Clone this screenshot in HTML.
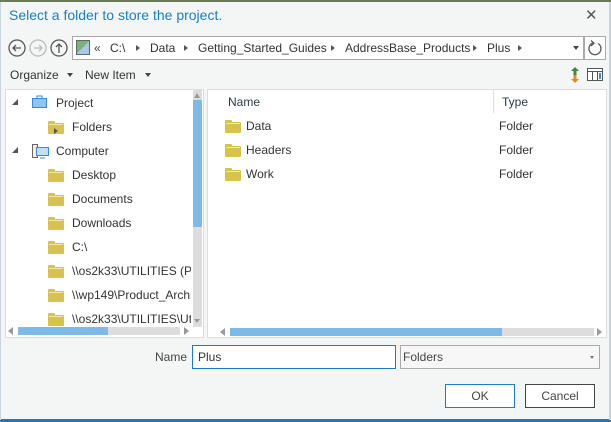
<!DOCTYPE html>
<html><head><style>
*{margin:0;padding:0;box-sizing:border-box}
body{width:611px;height:422px;overflow:hidden;background:#f4f6f6;font-family:"Liberation Sans",sans-serif;font-size:12px;color:#333;position:relative}
.a{position:absolute;white-space:nowrap}
.f{position:absolute;width:16px;height:11px;background:#d8c34a;border-radius:1px}
.f:before{content:"";position:absolute;left:0;top:-2px;width:7px;height:3px;background:#d8c34a;border-radius:1px 1px 0 0}
.f:after{content:"";position:absolute;left:1px;top:1px;width:14px;height:1px;background:#f3e8a8}
.t{font-size:12px;color:#333}
.tri{position:absolute;width:0;height:0;border-left:3px solid transparent;border-right:3px solid transparent;border-top:4px solid #444}
.arr{position:absolute;width:0;height:0;border-top:3.5px solid transparent;border-bottom:3.5px solid transparent;border-left:4px solid #555}
</style></head><body>
<div class="a" style="left:0;top:0;width:611px;height:2px;background:#6a7a5a"></div>
<div class="a" style="left:0;top:419px;width:611px;height:3px;background:#3b6fa0"></div>
<div class="a" style="left:0;top:2px;width:1px;height:418px;background:#c8d4dc"></div>
<div class="a" style="left:609px;top:2px;width:2px;height:418px;background:#c8d4dc"></div>
<div class="a" style="left:9px;top:7px;font-size:14px;color:#1c7fc4">Select a folder to store the project.</div>
<div class="a" style="left:585px;top:6px;font-size:15px;color:#555">✕</div>

<svg class="a" style="left:7px;top:38px" width="62" height="20">
<circle cx="10" cy="10" r="8" fill="none" stroke="#555" stroke-width="1.3"/><path d="M14 10H6M9 7L6 10L9 13" fill="none" stroke="#555" stroke-width="1.3"/>
<circle cx="31" cy="10" r="8" fill="none" stroke="#bbb" stroke-width="1.3"/><path d="M27 10H35M32 7L35 10L32 13" fill="none" stroke="#bbb" stroke-width="1.3"/>
<circle cx="52" cy="10" r="8" fill="none" stroke="#555" stroke-width="1.3"/><path d="M52 15V6M49 9L52 6L55 9" fill="none" stroke="#555" stroke-width="1.3"/>
</svg>
<div class="a" style="left:72px;top:36px;width:512px;height:24px;background:#fff;border:1px solid #aaa"></div>
<div class="a" style="left:76px;top:40px;width:14px;height:15px;background:linear-gradient(135deg,#7bb07b 50%,#a8c8e8 50%);border:1px solid #666"></div>
<div class="a" style="left:94px;top:41px;color:#444">«</div>
<div class="a" style="left:110px;top:41px;color:#333">C:\</div>
<div class="arr" style="left:136px;top:45px"></div>
<div class="a" style="left:150px;top:41px">Data</div>
<div class="arr" style="left:184px;top:45px"></div>
<div class="a" style="left:198px;top:41px">Getting_Started_Guides</div>
<div class="arr" style="left:331px;top:45px"></div>
<div class="a" style="left:345px;top:41px">AddressBase_Products</div>
<div class="arr" style="left:473px;top:45px"></div>
<div class="a" style="left:487px;top:41px">Plus</div>
<div class="arr" style="left:518px;top:45px"></div>
<div class="tri" style="left:573px;top:46px"></div>
<div class="a" style="left:584px;top:36px;width:22px;height:24px;border:1px solid #aaa;background:#fff"></div>
<svg class="a" style="left:587px;top:39px" width="16" height="18"><path d="M6 4A6 6 0 1 0 11 4.5" fill="none" stroke="#555" stroke-width="1.3"/><path d="M4 1.5L7 4.3L4 7" fill="none" stroke="#555" stroke-width="1.2"/></svg>

<div class="a" style="left:10px;top:68px;color:#333">Organize</div>
<div class="tri" style="left:67px;top:73px"></div>
<div class="a" style="left:85px;top:68px">New Item</div>
<div class="tri" style="left:145px;top:73px"></div>
<svg class="a" style="left:569px;top:66px" width="12" height="18"><path d="M6 1L2 5H4.5V9H7.5V5H10Z" fill="#3a8a3a"/><path d="M6 17L2 13H4.5V9H7.5V13H10Z" fill="#e08a2a"/></svg>
<svg class="a" style="left:587px;top:68px" width="16" height="13"><rect x="0.5" y="0.5" width="15" height="12" fill="#fff" stroke="#555"/><path d="M0.5 3.5H15.5M5.5 3.5V12.5M10.5 3.5V12.5" stroke="#555"/><rect x="12" y="5" width="2" height="6" fill="#3a8ad8"/></svg>

<!-- left pane -->
<div class="a" style="left:5px;top:89px;width:199px;height:249px;background:#fff;border:1px solid #ddd"></div>
<div class="a" style="left:193px;top:90px;width:9px;height:237px;background:#ddd"></div>
<div class="a" style="left:193px;top:100px;width:9px;height:127px;background:#7dbbe6"></div>
<div class="tri" style="left:194px;top:93px;border-top:0;border-bottom:5px solid #999;border-left-width:3.5px;border-right-width:3.5px"></div>
<div class="tri" style="left:194px;top:319px;border-top-color:#999;border-left-width:3.5px;border-right-width:3.5px"></div>
<div class="a" style="left:6px;top:326px;width:187px;height:9px;background:#fff"></div>
<div class="a" style="left:18px;top:327px;width:162px;height:8px;background:#ddd"></div>
<div class="a" style="left:18px;top:327px;width:90px;height:8px;background:#7dbbe6"></div>
<div class="a" style="left:8px;top:327px;width:0;height:0;border-top:4px solid transparent;border-bottom:4px solid transparent;border-right:5px solid #999"></div>
<div class="a" style="left:184px;top:327px;width:0;height:0;border-top:4px solid transparent;border-bottom:4px solid transparent;border-left:5px solid #999"></div>

<div class="a" style="left:12px;top:99px;width:0;height:0;border-left:6px solid transparent;border-bottom:6px solid #555"></div>
<svg class="a" style="left:32px;top:95px" width="16" height="14"><path d="M5 3V1H10V3" fill="none" stroke="#3a8ad8"/><rect x="0.5" y="3.5" width="14" height="9" fill="#8ec4ee" stroke="#3a8ad8"/></svg>
<div class="a t" style="left:56px;top:96px">Project</div>
<div class="f" style="left:48px;top:123px"></div>
<div class="a" style="left:54px;top:128px;width:0;height:0;border-top:3px solid transparent;border-bottom:3px solid transparent;border-left:4px solid #555"></div>
<div class="a t" style="left:72px;top:120px">Folders</div>
<div class="a" style="left:12px;top:147px;width:0;height:0;border-left:6px solid transparent;border-bottom:6px solid #555"></div>
<svg class="a" style="left:32px;top:144px" width="18" height="16"><rect x="0.5" y="0.5" width="5" height="13" fill="#eee" stroke="#666"/><rect x="4.5" y="3.5" width="12" height="8" fill="#bfe0f8" stroke="#3a8ad8"/><path d="M8 14H13" stroke="#3a8ad8"/></svg>
<div class="a t" style="left:56px;top:144px">Computer</div>
<div class="f" style="left:48px;top:171px"></div><div class="a t" style="left:72px;top:168px">Desktop</div>
<div class="f" style="left:48px;top:195px"></div><div class="a t" style="left:72px;top:192px">Documents</div>
<div class="f" style="left:48px;top:219px"></div><div class="a t" style="left:72px;top:216px">Downloads</div>
<div class="f" style="left:48px;top:243px"></div><div class="a t" style="left:72px;top:240px">C:\</div>
<div class="f" style="left:48px;top:267px"></div><div class="a t" style="left:72px;top:264px;width:119px;overflow:hidden">\\os2k33\UTILITIES (P:)</div>
<div class="f" style="left:48px;top:291px"></div><div class="a t" style="left:72px;top:288px;width:119px;overflow:hidden">\\wp149\Product_Archive</div>
<div class="f" style="left:48px;top:315px"></div><div class="a t" style="left:72px;top:312px;width:119px;height:13px;overflow:hidden">\\os2k33\UTILITIES\Utilities</div>

<!-- right pane -->
<div class="a" style="left:207px;top:89px;width:400px;height:249px;background:#fff;border:1px solid #ddd"></div>
<div class="a" style="left:493px;top:90px;width:1px;height:23px;background:#ddd"></div>
<div class="a" style="left:228px;top:95px;color:#2a3a4a">Name</div>
<div class="a" style="left:502px;top:95px;color:#2a3a4a">Type</div>
<div class="f" style="left:225px;top:122px"></div><div class="a t" style="left:246px;top:119px">Data</div><div class="a t" style="left:499px;top:119px">Folder</div>
<div class="f" style="left:225px;top:146px"></div><div class="a t" style="left:246px;top:143px">Headers</div><div class="a t" style="left:499px;top:143px">Folder</div>
<div class="f" style="left:225px;top:170px"></div><div class="a t" style="left:246px;top:167px">Work</div><div class="a t" style="left:499px;top:167px">Folder</div>
<div class="a" style="left:230px;top:328px;width:364px;height:8px;background:#ddd"></div>
<div class="a" style="left:230px;top:328px;width:272px;height:8px;background:#7dbbe6"></div>
<div class="a" style="left:220px;top:328px;width:0;height:0;border-top:4px solid transparent;border-bottom:4px solid transparent;border-right:5px solid #999"></div>
<div class="a" style="left:597px;top:328px;width:0;height:0;border-top:4px solid transparent;border-bottom:4px solid transparent;border-left:5px solid #999"></div>

<div class="a" style="left:155px;top:350px;color:#444">Name</div>
<div class="a" style="left:192px;top:345px;width:204px;height:24px;background:#fff;border:1px solid #1a7cc8"></div>
<div class="a" style="left:198px;top:350px">Plus</div>
<div class="a" style="left:400px;top:345px;width:200px;height:24px;background:#f7f7f7;border:1px solid #aaa"></div>
<div class="a" style="left:403px;top:350px;color:#444">Folders</div>
<div class="tri" style="left:590px;top:356px;border-top-color:#777;border-left-width:2.5px;border-right-width:2.5px;border-top-width:3px"></div>
<div class="a" style="left:445px;top:384px;width:70px;height:24px;background:#fff;border:1px solid #1a7cc8;text-align:center;line-height:22px;color:#444">OK</div>
<div class="a" style="left:525px;top:384px;width:70px;height:24px;background:#fff;border:1px solid #444;text-align:center;line-height:22px;color:#444">Cancel</div>
</body></html>
